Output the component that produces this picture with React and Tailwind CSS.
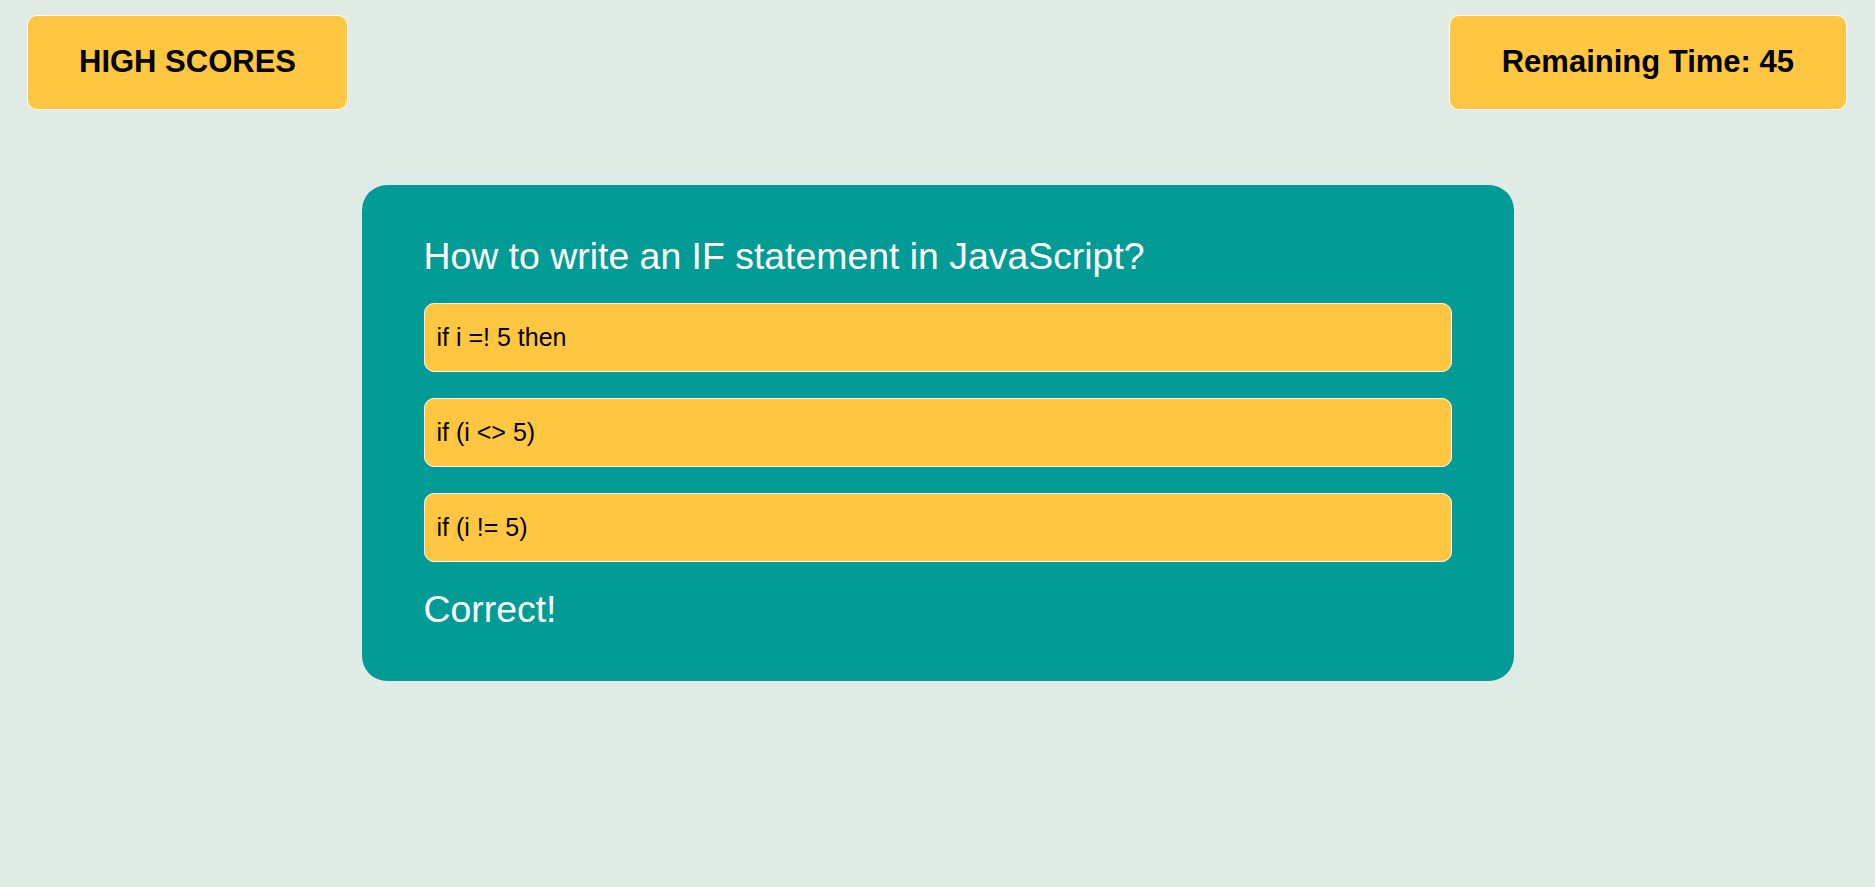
export default function App() {
  const answers = ["if i =! 5 then", "if (i <> 5)", "if (i != 5)"];

  return (
    <div
      className="min-h-screen w-full bg-[#e0ebe6] text-black"
      style={{ fontFamily: '"Liberation Sans", Arial, sans-serif' }}
    >
      {/* Header */}
      <header className="flex flex-row justify-between items-start pl-[27px] pr-[28px] pt-[15px]">
        <button className="h-[95px] px-[51px] bg-[#ffc641] border border-white rounded-[10px] text-[31px] font-bold">
          HIGH SCORES
        </button>
        <div className="h-[95px] px-[52px] flex items-center bg-[#ffc641] border border-white rounded-[10px] text-[31px] font-bold">
          Remaining Time: 45
        </div>
      </header>

      {/* Quiz Card */}
      <main className="w-[1152px] mx-auto mt-[75px] bg-[#039b95] rounded-[25px] pt-[49px] pb-[50px] px-[62px] flex flex-col">
        <h2 className="text-[37.4px] leading-[44px] text-white">
          How to write an IF statement in JavaScript?
        </h2>
        <div className="flex flex-col gap-[26px] mt-[25px]">
          {answers.map((a) => (
            <button
              key={a}
              className="h-[69px] w-full text-left pl-[12px] bg-[#ffc641] border border-white rounded-[10px] text-[25px]"
            >
              {a}
            </button>
          ))}
        </div>
        <p className="text-[37.4px] leading-[44px] text-white mt-[25px]">Correct!</p>
      </main>
    </div>
  );
}
